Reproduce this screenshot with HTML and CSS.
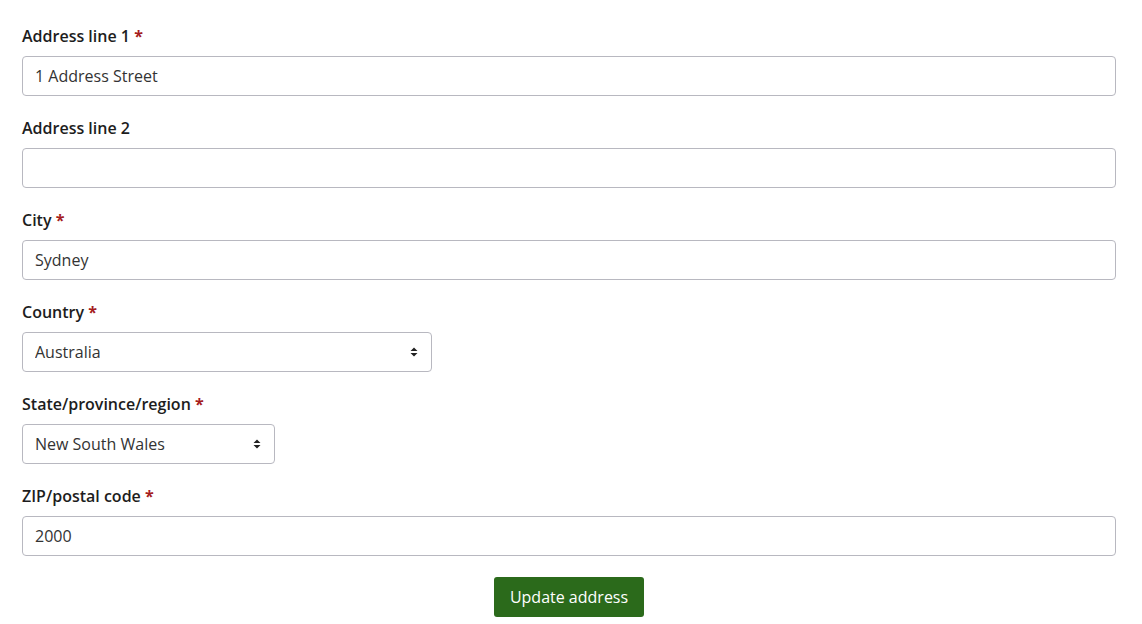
FILE: index.html
```html
<!DOCTYPE html>
<html lang="en">
<head>
    <meta charset="UTF-8">
    <meta name="viewport" content="width=device-width, initial-scale=1.0">
    <title>Update address</title>
    <link rel="stylesheet" href="styles.css">
</head>
<body>
    <form class="address-form">
        <div class="form-group">
            <label class="form-label" for="line1">Address line 1 <span class="required">*</span></label>
            <input type="text" class="form-control" id="line1" value="1 Address Street">
        </div>

        <div class="form-group">
            <label class="form-label" for="line2">Address line 2</label>
            <input type="text" class="form-control" id="line2" value="">
        </div>

        <div class="form-group">
            <label class="form-label" for="city">City <span class="required">*</span></label>
            <input type="text" class="form-control" id="city" value="Sydney">
        </div>

        <div class="form-group">
            <label class="form-label" for="country">Country <span class="required">*</span></label>
            <div class="select-wrap select-country">
                <select class="form-control form-select" id="country">
                    <option>Australia</option>
                </select>
                <svg class="select-arrow" width="8" height="10" viewBox="0 0 8 10">
                    <path d="M4 0.5 L7.5 4 L0.5 4 Z M4 9.5 L7.5 6 L0.5 6 Z" fill="#222"/>
                </svg>
            </div>
        </div>

        <div class="form-group">
            <label class="form-label" for="state">State/province/region <span class="required">*</span></label>
            <div class="select-wrap select-state">
                <select class="form-control form-select" id="state">
                    <option>New South Wales</option>
                </select>
                <svg class="select-arrow" width="8" height="10" viewBox="0 0 8 10">
                    <path d="M4 0.5 L7.5 4 L0.5 4 Z M4 9.5 L7.5 6 L0.5 6 Z" fill="#222"/>
                </svg>
            </div>
        </div>

        <div class="form-group">
            <label class="form-label" for="zip">ZIP/postal code <span class="required">*</span></label>
            <input type="text" class="form-control" id="zip" value="2000">
        </div>

        <div class="button-row">
            <button type="submit" class="btn-update">Update address</button>
        </div>
    </form>
</body>
</html>
```

FILE: styles.css
```css
* {
    margin: 0;
    padding: 0;
    box-sizing: border-box;
}

body {
    font-family: 'Open Sans', Arial, sans-serif;
    background: #fff;
    color: #222;
    padding: 26px 26px 0 22px;
}

.address-form {
    display: flex;
    flex-direction: column;
}

.form-group {
    display: flex;
    flex-direction: column;
    align-items: flex-start;
    margin-bottom: 22px;
}

.form-label {
    font-size: 16px;
    font-weight: 600;
    line-height: 20px;
    margin-bottom: 10px;
    color: #1d1d1d;
}

.required {
    color: #a51d1d;
    font-weight: 700;
}

.form-control {
    width: 100%;
    height: 40px;
    padding: 0 12px;
    border: 1px solid #b8b8c0;
    border-radius: 4px;
    background: #fff;
    font-family: inherit;
    font-size: 16px;
    color: #333;
    outline: none;
}

.select-wrap {
    position: relative;
}

.select-country {
    width: 410px;
}

.select-state {
    width: 253px;
}

.form-select {
    appearance: none;
    -webkit-appearance: none;
    padding-right: 30px;
}

.select-arrow {
    position: absolute;
    right: 14px;
    top: 15px;
    pointer-events: none;
}

.button-row {
    display: flex;
    justify-content: center;
    margin-top: -1px;
}

.btn-update {
    height: 40px;
    padding: 0 16px;
    border: none;
    border-radius: 3px;
    background: #2b6a1b;
    color: #fff;
    font-family: inherit;
    font-size: 16px;
    cursor: pointer;
}
```
